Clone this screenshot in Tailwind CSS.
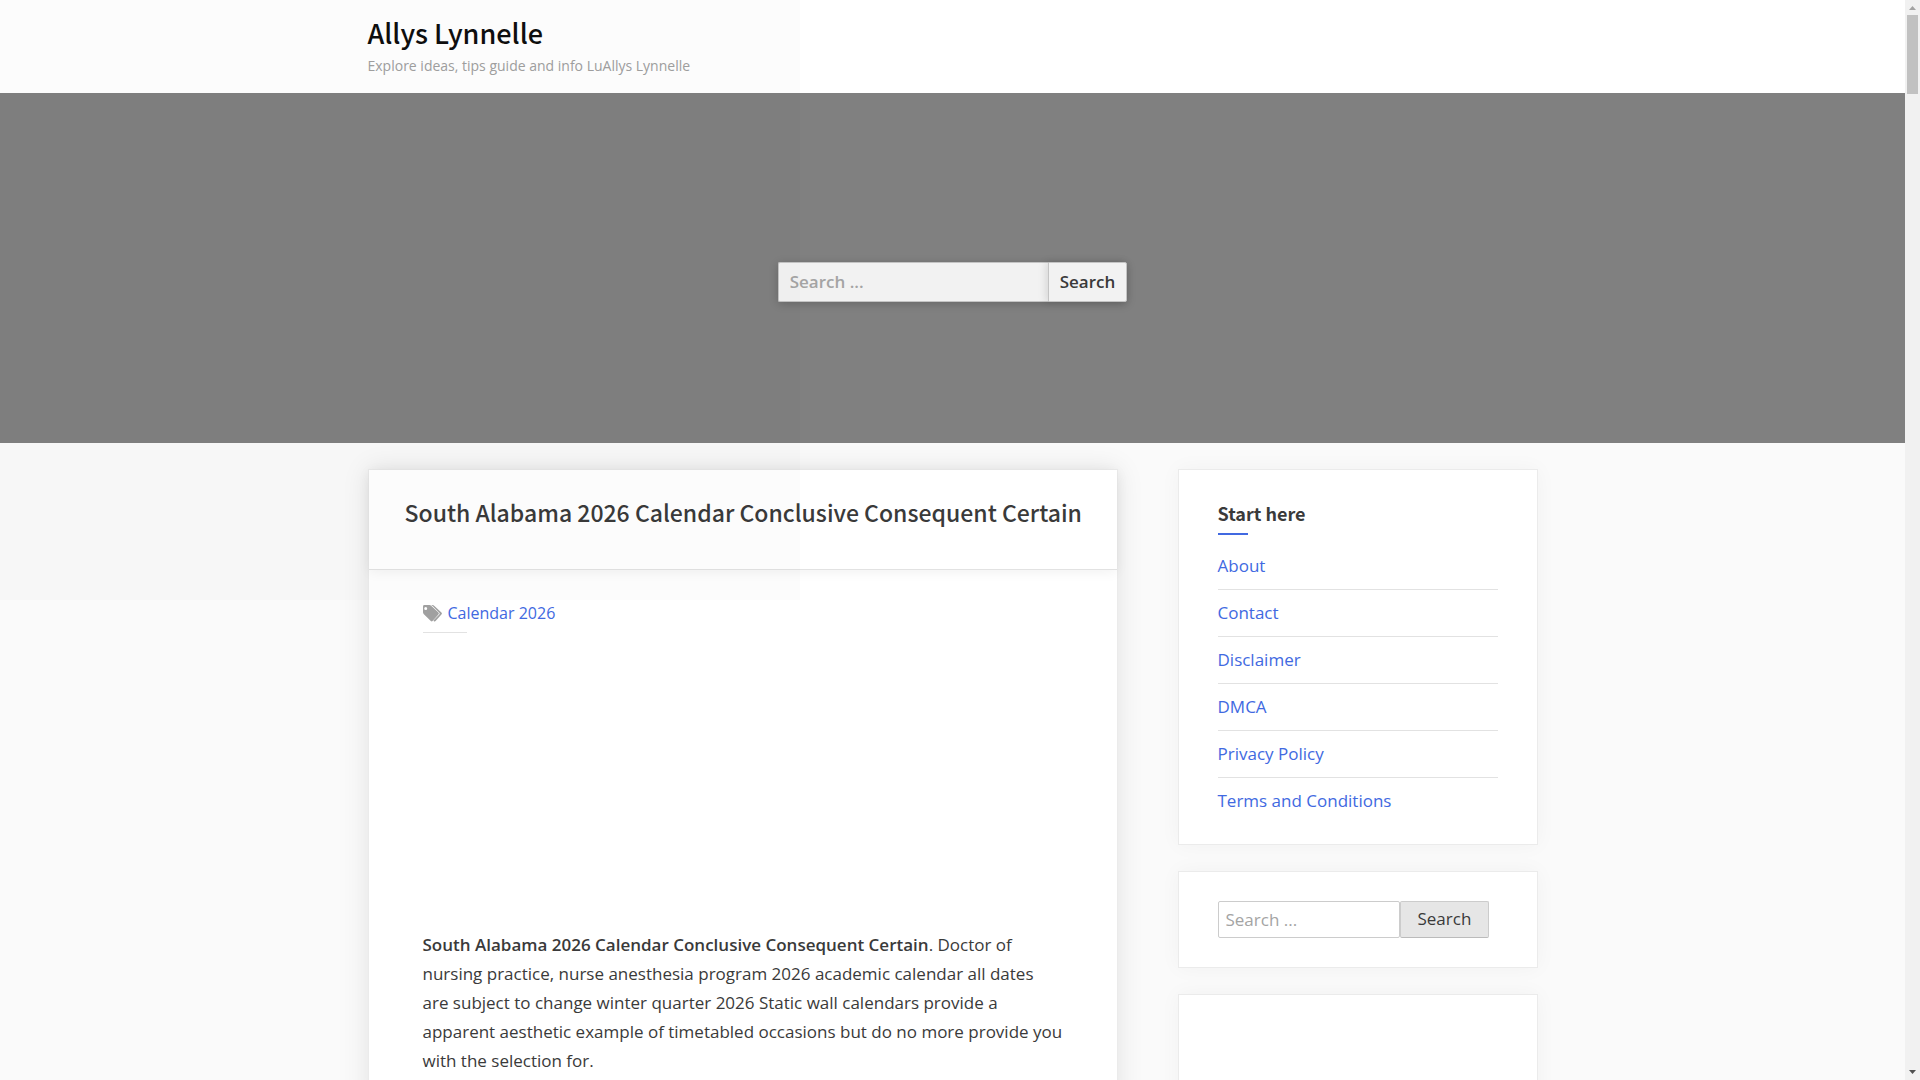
<!DOCTYPE html>
<html lang="en">

<head>
    <meta charset="UTF-8">
    <meta name="viewport" content="width=device-width, initial-scale=1.0">
    <title>South Alabama 2026 Calendar Conclusive Consequent Certain</title>
    <script src="https://cdn.jsdelivr.net/npm/@tailwindcss/browser@4"></script>
</head>

<body class="flex h-screen overflow-hidden bg-[#fafafa] font-['Open_Sans',sans-serif] text-[17px] leading-[29px] text-[#3a3a3a]">
    <div class="relative min-w-0 flex-1 overflow-hidden">
        <header class="bg-white pt-[15px] pb-[17px]">
            <div class="mx-auto max-w-[1170px]">
                <h1 class="font-['Noto_Sans_CJK_SC',sans-serif] text-[27px] leading-9 font-medium text-[#0f0f0f]"><a href="#">Allys Lynnelle</a></h1>
                <p class="mt-1 text-sm leading-[21px] text-[#a0a0a0]">Explore ideas, tips guide and info LuAllys Lynnelle</p>
            </div>
        </header>

        <section class="flex h-[350px] items-center justify-center bg-[#808080] pt-7">
            <form class="flex h-10 rounded-xs shadow-[0_2px_10px_rgba(0,0,0,0.2)]">
                <input id="hero-search" type="search" placeholder="Search ..." aria-label="Search for"
                    class="w-[270px] rounded-l-xs border border-r-0 border-[#c4c4c4] bg-[#f2f2f2] px-[11px] pb-[2px] font-semibold outline-none placeholder:text-[#a4a4a4]">
                <button type="submit"
                    class="rounded-r-xs border border-[#c4c4c4] bg-[#f2f2f2] px-[11px] pb-[2px] font-semibold shadow-[-2px_0_8px_rgba(0,0,0,0.12)]">Search</button>
            </form>
        </section>

        <div class="mx-auto flex max-w-[1170px] items-start justify-between pt-[26px]">
            <main class="w-[750px] border border-[#ebebeb] bg-white shadow-[0_0_25px_rgba(0,0,0,0.1)]">
                <article>
                    <div class="border-b border-[#e2e2e2] px-9 pt-6 pb-[39px] shadow-[0_2px_12px_rgba(0,0,0,0.06)]">
                        <h2 class="text-center font-['Noto_Sans_CJK_SC',sans-serif] text-[23px] leading-9 font-medium whitespace-nowrap">South Alabama 2026 Calendar Conclusive Consequent Certain</h2>
                    </div>
                    <div class="px-[54px] pt-7">
                        <div class="flex items-center gap-[6px] text-base leading-[30px]">
                            <svg class="h-[17px] w-[19px] fill-[#a0a0a0]" viewBox="0 0 19 17">
                                <path fill-rule="evenodd" d="M0 1.4Q0 0 1.4 0H6.4Q7.5 0 8.4.9L15.4 7.6Q16.4 8.6 15.4 9.6L9.8 15.8Q8.8 16.9 7.8 15.9L.9 9.2Q0 8.3 0 7.2ZM2.7 2A1.5 1.5 0 1 0 2.7 5A1.5 1.5 0 1 0 2.7 2Z" />
                                <path d="M8 0H9.4Q10.5 0 11.4.9L18.4 7.6Q19.4 8.6 18.4 9.6L12.8 15.8Q11.7 17 10.7 15.9L10.4 15.6L16.3 9.4Q17.1 8.6 16.3 7.8L9.8 1.2Q9 .3 8 0Z" />
                            </svg>
                            <a href="#" class="text-[#4169e1]">Calendar 2026</a>
                        </div>
                        <hr class="mt-1 w-11 border-[#e2e2e2]">
                        <p class="mt-[297px] pb-7"><strong class="font-semibold">South Alabama 2026 Calendar Conclusive Consequent Certain</strong>. Doctor of nursing practice, nurse anesthesia program 2026 academic calendar all dates are subject to change winter quarter 2026 Static wall calendars provide a apparent aesthetic example of timetabled occasions but do no more provide you with the selection for.</p>
                    </div>
                </article>
            </main>

            <aside class="flex w-[360px] flex-col gap-[26px]">
                <section class="border border-[#ebebeb] bg-white px-[39px] pt-[25px] pb-5 shadow-[0_0_20px_rgba(0,0,0,0.04)]">
                    <h2 class="font-['Noto_Sans_CJK_SC',sans-serif] text-lg leading-9 font-bold">Start here</h2>
                    <div class="mt-[2px] h-[2px] w-[30px] bg-[#4169e1]"></div>
                    <ul class="mt-2 divide-y divide-[#e2e2e2] leading-[46px] text-[#4169e1]">
                        <li><a href="#">About</a></li>
                        <li><a href="#">Contact</a></li>
                        <li><a href="#">Disclaimer</a></li>
                        <li><a href="#">DMCA</a></li>
                        <li><a href="#">Privacy Policy</a></li>
                        <li><a href="#">Terms and Conditions</a></li>
                    </ul>
                </section>

                <section class="border border-[#ebebeb] bg-white px-[39px] py-[29px] shadow-[0_0_20px_rgba(0,0,0,0.04)]">
                    <form class="flex h-[37px]">
                        <input id="side-search" type="search" placeholder="Search ..." aria-label="Search for"
                            class="w-[182px] rounded-xs border border-[#ccc] px-[7px] outline-none placeholder:text-[#a4a4a4]">
                        <button type="submit" class="rounded-xs border border-[#ccc] border-b-[#bbb] bg-[#e6e6e6] px-[17px] pb-[2px]">Search</button>
                    </form>
                </section>

                <section class="h-[300px] border border-[#ebebeb] bg-white shadow-[0_0_20px_rgba(0,0,0,0.04)]"></section>
            </aside>
        </div>

        <!-- faint tint over the top left corner -->
        <div class="pointer-events-none absolute top-0 left-0 h-[600px] w-[800px] bg-black/1"></div>
    </div>

    <!-- scrollbar -->
    <div class="flex w-[15px] flex-col items-center bg-[#f1f1f1]">
        <svg class="h-[15px] w-[15px] fill-[#a3a3a3]" viewBox="0 0 15 15"><path d="M4 10L7.500 6L11 10Z" /></svg>
        <div class="h-[79px] w-[11px] bg-[#c1c1c1]"></div>
        <svg class="mt-auto h-[15px] w-[15px] fill-[#505050]" viewBox="0 0 15 15"><path d="M4 5L7.500 9L11 5Z" /></svg>
    </div>
</body>

</html>
